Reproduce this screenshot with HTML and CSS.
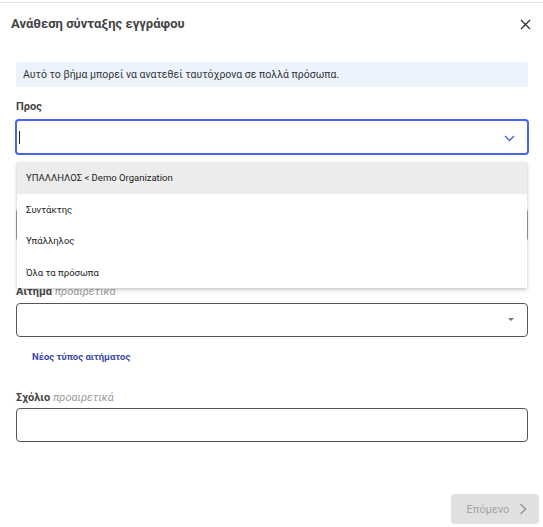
FILE: index.html
```html
<!DOCTYPE html>
<html lang="el">
<head>
    <meta charset="UTF-8">
    <meta name="viewport" content="width=device-width, initial-scale=1.0">
    <title>Ανάθεση σύνταξης εγγράφου</title>
    <link rel="stylesheet" href="styles.css">
</head>
<body>
    <div class="dialog">
        <div class="dialog-header">
            <h2 class="dialog-title">Ανάθεση σύνταξης εγγράφου</h2>
            <button class="close-btn" aria-label="Κλείσιμο">
                <svg width="11" height="11" viewBox="0 0 11 11"><path d="M1 1 L10 10 M10 1 L1 10" stroke="#333" stroke-width="1.4" fill="none"/></svg>
            </button>
        </div>

        <div class="dialog-body">
            <div class="info-box">Αυτό το βήμα μπορεί να ανατεθεί ταυτόχρονα σε πολλά πρόσωπα.</div>

            <div class="field field-to">
                <label class="field-label">Προς</label>
                <div class="input-box focused">
                    <span class="caret"></span>
                    <svg class="chevron" width="11" height="7" viewBox="0 0 11 7"><path d="M1 1 L5.5 5.5 L10 1" stroke="#4a5fd6" stroke-width="1.3" fill="none"/></svg>
                </div>

                <ul class="menu">
                    <li class="menu-item highlighted">ΥΠΑΛΛΗΛΟΣ &lt; Demo Organization</li>
                    <li class="menu-item">Συντάκτης</li>
                    <li class="menu-item">Υπάλληλος</li>
                    <li class="menu-item">Όλα τα πρόσωπα</li>
                </ul>
            </div>

            <!-- field sitting under the open menu -->
            <div class="field field-hidden">
                <div class="input-box grey"></div>
            </div>

            <div class="field field-request">
                <label class="field-label">Αίτημα <em>προαιρετικά</em></label>
                <div class="input-box">
                    <span class="triangle"></span>
                </div>
            </div>

            <a class="link" href="#">Νέος τύπος αιτήματος</a>

            <div class="field field-comment">
                <label class="field-label">Σχόλιο <em>προαιρετικά</em></label>
                <div class="input-box"></div>
            </div>
        </div>

        <div class="dialog-footer">
            <button class="next-btn" disabled>
                Επόμενο
                <svg width="8" height="12" viewBox="0 0 8 12"><path d="M1.5 1 L6.5 6 L1.5 11" stroke="#9a9a9a" stroke-width="1.6" fill="none"/></svg>
            </button>
        </div>
    </div>
</body>
</html>
```

FILE: styles.css
```css
body {
    margin: 0;
    padding-top: 2px;
    background: #ffffff;
    font-family: Roboto, "Noto Sans", sans-serif;
    color: #333;
}

.dialog {
    border-top: 1px solid #e2e2e2;
    width: 543px;
    height: 524px;
    display: flex;
    flex-direction: column;
}

.dialog-header {
    height: 40px;
    display: flex;
    align-items: center;
    justify-content: space-between;
    padding: 1px 12px 0 11px;
}

.dialog-title {
    margin: 0;
    font-size: 13px;
    font-weight: 700;
    color: #444;
    line-height: 16px;
}

.close-btn {
    border: none;
    background: none;
    padding: 0;
    display: flex;
    cursor: pointer;
}

.dialog-body {
    padding: 18px 15px 0 16px;
    flex: 1;
}

.info-box {
    background: #edf3fd;
    border-radius: 3px;
    height: 25px;
    line-height: 25px;
    padding-left: 7px;
    font-size: 10.5px;
    color: #333;
}

.field {
    display: flex;
    flex-direction: column;
}

.field-label {
    font-size: 11px;
    font-weight: 700;
    color: #444;
    line-height: 14px;
    margin-bottom: 4px;
}

.field-label em {
    font-weight: 400;
    color: #9a9a9a;
}

.input-box {
    height: 32px;
    border: 1px solid #555;
    border-radius: 4px;
    position: relative;
    display: flex;
    align-items: center;
}

.input-box.grey {
    border-color: #9a9a9a;
}

.input-box.focused {
    height: 32px;
    border: 2px solid #4a64ee;
    margin: 0 -1px;
}

.field-to {
    margin-top: 13px;
    position: relative;
}

.field-to .field-label {
    margin-bottom: 5px;
}

.caret {
    width: 1px;
    height: 13px;
    background: #222;
    margin-left: 2px;
}

.chevron {
    position: absolute;
    right: 12px;
    top: 14px;
}

.triangle {
    position: absolute;
    right: 13px;
    top: 14px;
    border-left: 3px solid transparent;
    border-right: 3px solid transparent;
    border-top: 3px solid #777;
}

.menu {
    position: absolute;
    top: calc(100% + 7px);
    left: 1px;
    right: 1px;
    margin: 0;
    padding: 0;
    list-style: none;
    background: #fff;
    box-shadow: 0 2px 4px rgba(0, 0, 0, 0.2), 0 0 2px rgba(0, 0, 0, 0.08);
    z-index: 2;
}

.menu-item {
    height: 31.5px;
    line-height: 31.5px;
    padding-left: 9px;
    font-size: 9.5px;
    color: #222;
}

.menu-item.highlighted {
    background: #ececec;
}

.field-hidden {
    margin-top: 53px;
}

.field-request {
    margin-top: 43px;
}

.link {
    display: block;
    margin: 14px 0 0 16px;
    font-size: 9.5px;
    line-height: 12px;
    font-weight: 700;
    color: #3949ab;
    text-decoration: none;
}

.field-comment {
    margin-top: 28px;
}

.field-comment .field-label {
    margin-bottom: 3px;
}

.dialog-footer {
    display: flex;
    justify-content: flex-end;
    padding: 0 4px 3px 0;
}

.next-btn {
    width: 88px;
    height: 30px;
    border: none;
    border-radius: 4px;
    background: #e0e0e0;
    color: #a3a3a3;
    font-family: Roboto, "Noto Sans", sans-serif;
    font-size: 11px;
    display: flex;
    align-items: center;
    justify-content: center;
    gap: 10px;
    padding: 0 0 0 4px;
}
```
